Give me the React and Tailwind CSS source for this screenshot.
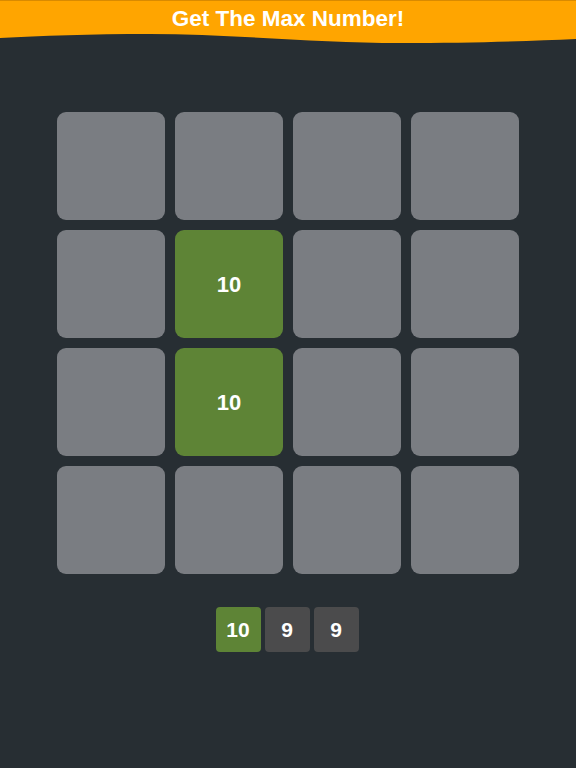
export default function App() {
  /* ===== BOARD DATA ===== */
  const board = [
    [null, null, null, null],
    [null, 10, null, null],
    [null, 10, null, null],
    [null, null, null, null],
  ];

  const queue = [10, 9, 9];

  return (
    <div
      className="min-h-screen bg-[#272e33] flex flex-col items-center"
      style={{ fontFamily: '"Liberation Sans", Arial, sans-serif' }}
    >
      {/* ===== HEADER ===== */}
      <div className="w-full">
        <div className="h-[33px] bg-[#ffa500] border-t border-[#d98a00] flex items-center justify-center pt-[4px]">
          <h1 className="text-[22.5px] font-bold text-white leading-none">
            Get The Max Number!
          </h1>
        </div>
        <svg
          className="block w-full"
          height="11"
          viewBox="0 0 576 11"
          preserveAspectRatio="none"
        >
          <path
            d="M0 0 H576 V6 C530 8 470 10 400 10 C320 10 230 1 150 1 C90 1 40 3 0 5 Z"
            fill="#ffa500"
          />
        </svg>
      </div>

      {/* ===== BOARD ===== */}
      <div className="mt-[68px] grid grid-cols-4 gap-[10px]">
        {board.flat().map((v, i) => (
          <div
            key={i}
            className={`w-[108px] h-[108px] rounded-[9px] flex items-center justify-center text-white font-bold text-[22px] ${
              v ? "bg-[#5e8436]" : "bg-[#7a7d82]"
            }`}
          >
            {v}
          </div>
        ))}
      </div>

      {/* ===== NEXT NUMBERS ===== */}
      <div className="mt-[33px] flex gap-[4px] -translate-x-[1px]">
        {queue.map((n, i) => (
          <div
            key={i}
            className={`w-[45px] h-[45px] rounded-[4px] flex items-center justify-center text-white font-bold text-[21px] ${
              i === 0 ? "bg-[#5e8436]" : "bg-[#4b4b4c]"
            }`}
          >
            {n}
          </div>
        ))}
      </div>
    </div>
  );
}
